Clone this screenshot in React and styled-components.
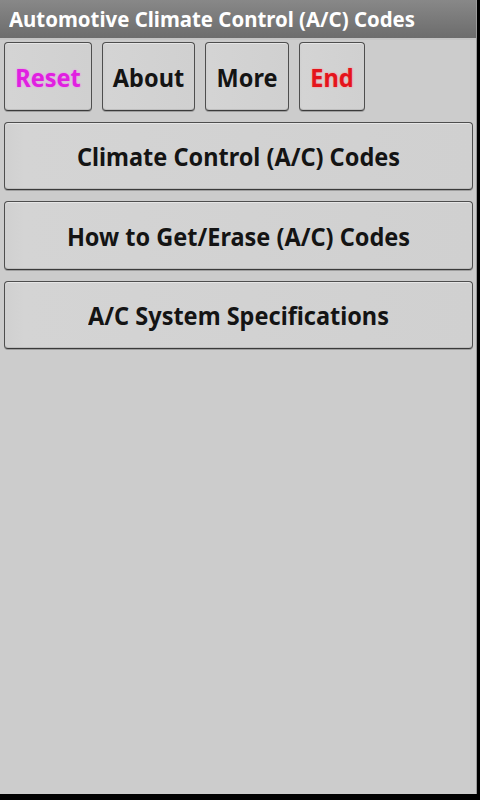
import React from "react";
import styled, { createGlobalStyle } from "styled-components";

const Global = createGlobalStyle`
  html, body { margin: 0; padding: 0; background: #000; }
  body { font-family: "Noto Sans", "Open Sans", sans-serif; }
`;

const Screen = styled.div`
  width: 476px;
  height: 794px;
  background: #cccccc;
  border-right: 1px solid #9a9a9a;
  display: flex;
  flex-direction: column;
  overflow: hidden;
`;

const TitleBar = styled.div`
  box-sizing: border-box;
  height: 40px;
  background: linear-gradient(#888888, #6c6c6c);
  border-bottom: 2px solid #c4c4c4;
  display: flex;
  align-items: center;
  padding: 0 0 3px 9px;
  color: #ffffff;
  font-weight: 700;
  font-size: 20.4px;
  white-space: nowrap;
`;

const Tall = styled.span`
  display: inline-block;
  transform: scaleY(1.09);
`;

const Content = styled.div`
  display: flex;
  flex-direction: column;
  padding: 2px 3px 0 4px;
  gap: 11px;
`;

const Row = styled.div`
  display: flex;
  gap: 10px;
`;

const Button = styled.button`
  box-sizing: border-box;
  width: ${(p) => p.$w || "100%"};
  height: ${(p) => p.$h || "69px"};
  margin: 0;
  padding: 0;
  border: 1px solid #4e4e4e;
  border-bottom-color: #3a3a3a;
  border-radius: 4px;
  background: linear-gradient(90deg, #d0d0d0 0, #d4d4d4 4%, #d0d0d0 100%);
  box-shadow: inset 0 1px 0 #e6e6e6, inset 0 -1px 0 #bdbdbd, 0 1px 0 #9e9e9e;
  font-family: "Noto Sans", "Open Sans", sans-serif;
  font-weight: 700;
  font-size: 23.5px;
  color: ${(p) => p.$color || "#141414"};
  text-shadow: ${(p) => (p.$glow ? `0 0 2px ${p.$glow}` : "none")};
  display: flex;
  align-items: center;
  justify-content: center;
  white-space: nowrap;
`;

export default function App() {
  return (
    <>
      <Global />
      <Screen>
        <TitleBar>
          <Tall>Automotive Climate Control (A/C) Codes</Tall>
        </TitleBar>
        <Content>
          <Row>
            <Button $w="88px" $color="#e020e0" $glow="#f080f0"><Tall>Reset</Tall></Button>
            <Button $w="93px"><Tall>About</Tall></Button>
            <Button $w="84px"><Tall>More</Tall></Button>
            <Button $w="66px" $color="#e4141c" $glow="#ff8080"><Tall>End</Tall></Button>
          </Row>
          <Button $h="68px"><Tall>Climate Control (A/C) Codes</Tall></Button>
          <Button $h="69px"><Tall>How to Get/Erase (A/C) Codes</Tall></Button>
          <Button $h="68px"><Tall>A/C System Specifications</Tall></Button>
        </Content>
      </Screen>
    </>
  );
}
